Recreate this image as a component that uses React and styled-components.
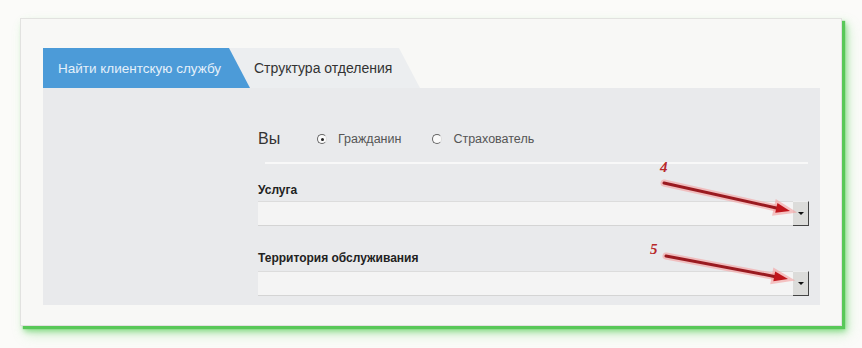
import React from 'react'
import styled, { createGlobalStyle } from 'styled-components'

const Global = createGlobalStyle`
  html, body {
    margin: 0;
    padding: 0;
    background: #fbfbf9;
    font-family: "Liberation Sans", Arial, sans-serif;
  }
`

const Page = styled.div`
  width: 862px;
  height: 348px;
  padding: 18px 0 0 20px;
  box-sizing: border-box;
`

const Card = styled.div`
  position: relative;
  width: 822px;
  height: 308px;
  box-sizing: border-box;
  background: #f8f8f6;
  border: 1px solid #e2e2e0;
  box-shadow: 3px 3px 1px #58c858, 4px 5px 6px rgba(90, 205, 90, 0.7), 6px 8px 12px rgba(120, 220, 120, 0.35);
  padding: 29px 21px 0 22px;
`

const Tabs = styled.div`
  display: flex;
  height: 40px;
`

const Tab = styled.div`
  position: relative;
  height: 40px;
  display: flex;
  align-items: center;
  box-sizing: border-box;
  padding-left: ${p => p.$pad}px;
  width: ${p => p.$w}px;
  margin-right: ${p => p.$overlap ? -21 : 0}px;
  z-index: ${p => p.$active ? 2 : 1};
  background: ${p => p.$active ? '#4c9bd8' : '#eceef0'};
  clip-path: polygon(0 0, calc(100% - 21px) 0, 100% 100%, 0 100%);
  color: ${p => p.$active ? '#e4f0fa' : '#333'};
  font-size: ${p => p.$active ? 13.5 : 14}px;
  white-space: nowrap;
`

const Panel = styled.div`
  height: 217px;
  background: #e9eaec;
  display: flex;
  justify-content: flex-end;
  padding: 0 11px 0 0;
`

const Form = styled.div`
  width: 551px;
  display: flex;
  flex-direction: column;
`

const YouRow = styled.div`
  display: flex;
  align-items: center;
  height: 24px;
  margin-top: 39px;
`

const You = styled.span`
  font-size: 16px;
  color: #333;
  width: 59px;
`

const Radio = styled.label`
  display: flex;
  align-items: center;
  gap: 11px;
  font-size: 12.5px;
  color: #555;
  margin-right: ${p => p.$mr || 0}px;
`

const Dot = styled.span`
  width: 8px;
  height: 8px;
  border-radius: 50%;
  border: 1px solid #666;
  border-right-color: #ddd;
  background: #fafafa;
  position: relative;
  &::after {
    content: '';
    display: ${p => p.$on ? 'block' : 'none'};
    position: absolute;
    left: 2.5px;
    top: 2.5px;
    width: 3px;
    height: 3px;
    border-radius: 50%;
    background: #222;
  }
`

const Separator = styled.div`
  height: 2px;
  background: #f8f8f8;
  margin: 11px 0 0 7px;
  width: 543px;
`

const Label = styled.div`
  font-size: 12px;
  font-weight: bold;
  color: #222;
  margin-top: ${p => p.$mt}px;
  height: 14px;
  line-height: 14px;
`

const Select = styled.div`
  display: flex;
  height: 25px;
  margin-top: ${p => p.$mt}px;
`

const Field = styled.div`
  flex: 1;
  background: #f4f4f4;
  border-top: 1px solid #dcdcdc;
  border-bottom: 1px solid #d4d4d4;
`

const DropButton = styled.div`
  width: 16px;
  box-sizing: border-box;
  background: #dcdcda;
  border-right: 1px solid #444;
  border-bottom: 1px solid #444;
  border-top: 1px solid #eee;
  display: flex;
  align-items: center;
  justify-content: center;
  &::after {
    content: '';
    border-left: 3px solid transparent;
    border-right: 3px solid transparent;
    border-top: 3px solid #111;
  }
`

const Annotations = styled.svg`
  position: absolute;
  left: -21px;
  top: -19px;
  width: 862px;
  height: 348px;
  pointer-events: none;
  overflow: visible;
`

const Num = styled.text`
  font-family: "Liberation Serif", serif;
  font-style: italic;
  font-weight: bold;
  font-size: 15px;
  fill: #b8282a;
`

const Arrow = ({ x1, y1, x2, y2 }) => {
  const a = Math.atan2(y2 - y1, x2 - x1)
  const len = 14
  const w = 5
  const bx = x2 - len * Math.cos(a)
  const by = y2 - len * Math.sin(a)
  const px = -Math.sin(a) * w
  const py = Math.cos(a) * w
  const head = `${x2},${y2} ${bx + px},${by + py} ${bx - px},${by - py}`
  return (
    <g>
      <line x1={x1} y1={y1} x2={bx} y2={by} stroke="#f5a0a0" strokeWidth="7" strokeLinecap="round" opacity="0.6" />
      <polygon points={head} fill="#f5a0a0" stroke="#f5a0a0" strokeWidth="5" opacity="0.6" />
      <line x1={x1} y1={y1} x2={bx} y2={by} stroke="#9a1a20" strokeWidth="3" strokeLinecap="round" />
      <polygon points={head} fill="#c0161c" />
    </g>
  )
}

export default function App() {
  return (
    <Page>
      <Global />
      <Card>
        <Tabs>
          <Tab $active $overlap $w={207} $pad={15}>Найти клиентскую службу</Tab>
          <Tab $w={191} $pad={25}>Структура отделения</Tab>
        </Tabs>
        <Panel>
          <Form>
            <YouRow>
              <You>Вы</You>
              <Radio $mr={31}><Dot $on />Гражданин</Radio>
              <Radio><Dot />Страхователь</Radio>
            </YouRow>
            <Separator />
            <Label $mt={19}>Услуга</Label>
            <Select $mt={4}>
              <Field />
              <DropButton />
            </Select>
            <Label $mt={25}>Территория обслуживания</Label>
            <Select $mt={6}>
              <Field />
              <DropButton />
            </Select>
          </Form>
        </Panel>
        <Annotations viewBox="0 0 862 348">
          <Num x="660" y="172">4</Num>
          <Arrow x1={664} y1={183} x2={790} y2={211} />
          <Num x="650" y="254">5</Num>
          <Arrow x1={666} y1={256} x2={788} y2={279} />
        </Annotations>
      </Card>
    </Page>
  )
}
